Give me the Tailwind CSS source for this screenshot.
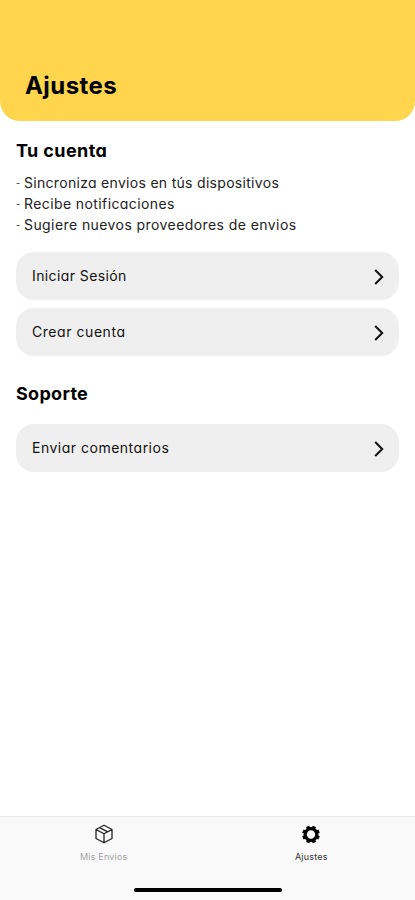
<!DOCTYPE html>
<html lang="es">
<head>
    <meta charset="UTF-8">
    <meta name="viewport" content="width=device-width, initial-scale=1.0">
    <title>Ajustes</title>
    <script src="https://cdn.jsdelivr.net/npm/@tailwindcss/browser@4"></script>
</head>
<body class="flex flex-col h-screen overflow-hidden bg-white text-black font-[Inter,sans-serif] [font-feature-settings:'cv11']">
    <header class="flex items-end h-[121px] shrink-0 px-[25px] pb-5 bg-[#ffd54d] rounded-b-[20px]">
        <h1 class="text-2xl leading-[30px] font-bold tracking-[0.45px]"><span>Ajustes</span></h1>
    </header>

    <main class="flex-1 px-4 pt-4">
        <section>
            <h2 class="text-lg leading-7 font-bold tracking-[0.4px]"><span>Tu cuenta</span></h2>
            <ul class="mt-[7px] text-[14px] leading-[21px] text-[#222]">
                <li class="flex tracking-[0.3px]"><span class="w-2 shrink-0 text-[9px]">-</span><span>Sincroniza envios en tús dispositivos</span></li>
                <li class="flex tracking-[0.4px]"><span class="w-2 shrink-0 text-[9px]">-</span><span>Recibe notificaciones</span></li>
                <li class="flex tracking-[0.42px]"><span class="w-2 shrink-0 text-[9px]">-</span><span>Sugiere nuevos proveedores de envios</span></li>
            </ul>
            <div class="mt-[17px] flex flex-col gap-2">
                <button class="flex items-center justify-between h-12 pl-4 pr-[15px] rounded-[18px] bg-[#efefef] text-[#111] text-sm tracking-[0.4px]">
                    <span>Iniciar Sesión</span>
                    <svg class="w-[10px] h-4 mt-0.5" viewBox="0 0 10 16" fill="none" stroke="#111" stroke-width="2"><path d="M1.2 1 8.2 8l-7 7"/></svg>
                </button>
                <button class="flex items-center justify-between h-12 pl-4 pr-[15px] rounded-[18px] bg-[#efefef] text-[#111] text-sm tracking-[0.55px]">
                    <span>Crear cuenta</span>
                    <svg class="w-[10px] h-4 mt-0.5" viewBox="0 0 10 16" fill="none" stroke="#111" stroke-width="2"><path d="M1.2 1 8.2 8l-7 7"/></svg>
                </button>
            </div>
        </section>

        <section class="mt-6">
            <h2 class="text-lg leading-7 font-bold tracking-[0.3px]"><span>Soporte</span></h2>
            <button class="mt-4 w-full flex items-center justify-between h-12 pl-4 pr-[15px] rounded-[18px] bg-[#efefef] text-[#111] text-sm tracking-[0.5px]">
                <span>Enviar comentarios</span>
                <svg class="w-[10px] h-4 mt-0.5" viewBox="0 0 10 16" fill="none" stroke="#111" stroke-width="2"><path d="M1.2 1 8.2 8l-7 7"/></svg>
            </button>
        </section>
    </main>

    <nav class="flex flex-col items-center h-[84px] shrink-0 border-t border-[#ececec] bg-[#f9f9f9]">
        <div class="w-full grid grid-cols-2 pt-[7px] text-[9px] leading-3 tracking-[0.2px]">
            <a class="flex flex-col items-center gap-[7px] text-[#a3a3a3]">
                <svg class="w-5 h-5" viewBox="0 0 20 20" fill="none" stroke="#222" stroke-width="1.3" stroke-linejoin="round"><path d="M10 1.2 18 5.5v9L10 18.8 2 14.5v-9zM2 5.5l8 4.3 8-4.3M10 9.8v9M5.6 3.7l8.2 4.2"/></svg>
                <span>Mis Envios</span>
            </a>
            <a class="flex flex-col items-center gap-[7px] text-[#333]">
                <!-- eight teeth around a ring -->
                <svg class="w-5 h-5" viewBox="0 0 20 20"><g transform="translate(10 10.5) rotate(22.5)" stroke="#000" fill="none"><circle r="5.8" stroke-width="3.2"/><path stroke-width="3.6" d="M0-5.5v-3.3M0 5.5v3.3M-5.5 0h-3.3M5.5 0h3.3M-3.9-3.9l-2.3-2.3M3.9-3.9l2.3-2.3M-3.9 3.9l-2.3 2.3M3.9 3.9l2.3 2.3"/></g></svg>
                <span>Ajustes</span>
            </a>
        </div>
        <div class="mt-auto mb-2 w-[148px] h-[4px] rounded-full bg-black"></div>
    </nav>
</body>
</html>
